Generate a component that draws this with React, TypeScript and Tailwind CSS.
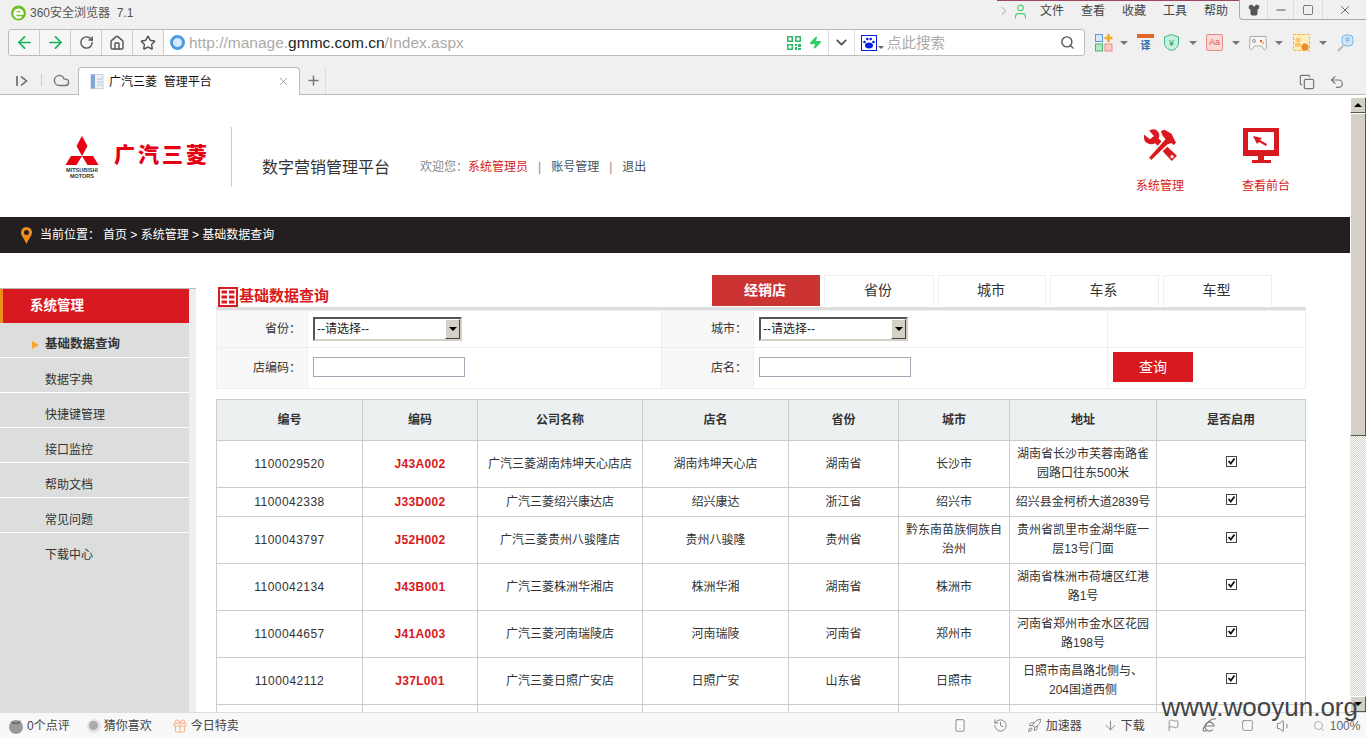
import {
  ArrowDown,
  ArrowLeft,
  ArrowRight,
  ChevronDown,
  ChevronRight,
  Cloud,
  Flag,
  Gift,
  Home,
  Minus,
  Plus,
  RotateCw,
  Rocket,
  Search,
  Shirt,
  Smartphone,
  Square,
  Star,
  Undo2,
  User,
  Volume1,
  X,
  Zap,
  Copy,
  History,
} from "lucide-react";

const menus = ["文件", "查看", "收藏", "工具", "帮助"];
const sideItems = ["数据字典", "快捷键管理", "接口监控", "帮助文档", "常见问题", "下载中心"];
const tabs = [
  { label: "省份", cls: "w-[110px]" },
  { label: "城市", cls: "w-[108px]" },
  { label: "车系", cls: "w-[109px]" },
  { label: "车型", cls: "w-[109px]" },
];
const heads = ["编号", "编码", "公司名称", "店名", "省份", "城市", "地址", "是否启用"];
const rows = [
  { h: "h-[47px]", id: "1100029520", code: "J43A002", company: "广汽三菱湖南炜坤天心店店", shop: "湖南炜坤天心店", prov: "湖南省", city: "长沙市", addr: "湖南省长沙市芙蓉南路雀园路口往东500米" },
  { h: "h-[29px]", id: "1100042338", code: "J33D002", company: "广汽三菱绍兴康达店", shop: "绍兴康达", prov: "浙江省", city: "绍兴市", addr: "绍兴县金柯桥大道2839号" },
  { h: "h-[47px]", id: "1100043797", code: "J52H002", company: "广汽三菱贵州八骏隆店", shop: "贵州八骏隆", prov: "贵州省", city: "黔东南苗族侗族自治州", addr: "贵州省凯里市金湖华庭一层13号门面" },
  { h: "h-[47px]", id: "1100042134", code: "J43B001", company: "广汽三菱株洲华湘店", shop: "株洲华湘", prov: "湖南省", city: "株洲市", addr: "湖南省株洲市荷塘区红港路1号" },
  { h: "h-[47px]", id: "1100044657", code: "J41A003", company: "广汽三菱河南瑞陵店", shop: "河南瑞陵", prov: "河南省", city: "郑州市", addr: "河南省郑州市金水区花园路198号" },
  { h: "h-[47px]", id: "1100042112", code: "J37L001", company: "广汽三菱日照广安店", shop: "日照广安", prov: "山东省", city: "日照市", addr: "日照市南昌路北侧与、204国道西侧" },
  { h: "h-[47px]", id: "", code: "", company: "", shop: "", prov: "", city: "", addr: "" },
];

function Caret() {
  return <span className="h-0 w-0 border-x-[4px] border-t-[4px] border-x-transparent border-t-[#777]" />;
}

function TitleBar() {
  return (
    <div className="flex h-[29px]">
      <svg className="ml-[11px] mt-[5px] h-[16px] w-[15px]" viewBox="0 0 15 16">
        <circle cx="7.5" cy="8" r="7.5" fill="#6cc024" />
        <path d="M3.500 8.500h8a4 4 0 1 0-1.200 3" fill="none" stroke="#fff" strokeWidth="2.400" />
      </svg>
      <span className="ml-[4px] mt-[5px] text-[12px] leading-[17px] text-[#555]">360安全浏览器&nbsp;&nbsp;7.1</span>
      <div className="ml-auto flex h-[21px] items-start">
        <div className="flex h-[21px] items-center border-t border-[#a0455f]">
          <ChevronRight className="h-[14px] w-[14px] text-[#999]" strokeWidth={1.5} />
          <User className="ml-[1px] h-[17px] w-[17px] text-[#4fcf75]" strokeWidth={1.6} />
          <div className="ml-[11px] flex gap-[17px] pr-[11px]">
            {menus.map((m) => (
              <span key={m} className="text-[12px] leading-[16px] text-[#444]">
                {m}
              </span>
            ))}
          </div>
        </div>
        <div className="flex h-[20px] w-[127px] items-center rounded-bl-[4px] border-b border-l border-[#aaa] text-[#555]">
          <div className="flex h-full w-[28px] items-center justify-center border-r border-[#ddd]">
            <Shirt className="h-[12px] w-[12px] fill-[#555]" />
          </div>
          <div className="flex h-full w-[26px] items-center justify-center border-r border-[#ddd]">
            <Minus className="h-[14px] w-[14px]" />
          </div>
          <div className="flex h-full w-[29px] items-center justify-center border-r border-[#ddd]">
            <Square className="h-[12px] w-[12px]" strokeWidth={1.5} />
          </div>
          <div className="flex h-full flex-1 items-center justify-center">
            <X className="h-[14px] w-[14px]" strokeWidth={1.5} />
          </div>
        </div>
      </div>
    </div>
  );
}

function NavButton({ children }: { children: React.ReactNode }) {
  return <div className="flex h-full w-[31px] items-center justify-center border-r border-[#ccc]">{children}</div>;
}

function AddressBar() {
  return (
    <div className="flex h-[27px]">
      <div className="ml-[8px] flex h-[27px] w-[1077px] items-center overflow-hidden rounded-[3px] border border-[#bbb] bg-white">
        <div className="flex h-full bg-[#f6f6f6]">
          <NavButton><ArrowLeft className="h-[19px] w-[19px] text-[#16b35a]" strokeWidth={2.2} /></NavButton>
          <NavButton><ArrowRight className="h-[19px] w-[19px] text-[#16b35a]" strokeWidth={2.2} /></NavButton>
          <NavButton><RotateCw className="h-[15px] w-[15px] text-[#555]" strokeWidth={2.2} /></NavButton>
          <NavButton><Home className="h-[16px] w-[16px] text-[#555]" strokeWidth={2.2} /></NavButton>
          <NavButton><Star className="h-[16px] w-[16px] text-[#555]" strokeWidth={2.2} /></NavButton>
        </div>
        <span className="ml-[6px] h-[15px] w-[15px] rounded-full border-[3px] border-[#4a9be0] bg-[#d5e9fa]" />
        <span className="ml-[4px] text-[15.500px] text-[#aaa]">
          http://manage.<span className="text-[#222]">gmmc.com.cn</span>/Index.aspx
        </span>
        <svg className="ml-auto h-[14px] w-[14px]" viewBox="0 0 14 14" fill="#2fb866">
          <path d="M0 0h6v6H0zM1.500 1.500v3h3v-3zM8 0h6v6H8zM9.500 1.500v3h3v-3zM0 8h6v6H0zM1.500 9.500v3h3v-3zM8 8h2v2H8zM11 8h3v3h-3zM8 11h2v3H8zM11 12h3v2h-3z" fillRule="evenodd" />
        </svg>
        <Zap className="ml-[8px] h-[15px] w-[13px] fill-[#2fd06a] text-[#2fd06a]" />
        <div className="ml-[6px] h-full w-px bg-[#ddd]" />
        <ChevronDown className="ml-[4px] h-[17px] w-[17px] text-[#555]" strokeWidth={2.6} />
        <div className="ml-[4px] h-full w-px bg-[#ddd]" />
        <svg className="ml-[6px] h-[16px] w-[16px]" viewBox="0 0 16 16">
          <rect x="0.500" y="0.500" width="15" height="15" fill="#fff" stroke="#0a1ee0" />
          <ellipse cx="8" cy="10.500" rx="4" ry="3" fill="#0a1ee0" />
          <circle cx="3.500" cy="7" r="1.300" fill="#0a1ee0" />
          <circle cx="6.300" cy="4" r="1.300" fill="#0a1ee0" />
          <circle cx="9.700" cy="4" r="1.300" fill="#0a1ee0" />
          <circle cx="12.500" cy="7" r="1.300" fill="#0a1ee0" />
        </svg>
        <span className="ml-[1px] mt-[10px] h-0 w-0 border-x-[3px] border-t-[3px] border-x-transparent border-t-[#666]" />
        <span className="ml-[3px] text-[14.500px] leading-[20px] text-[#aaa]">点此搜索</span>
        <Search className="ml-[115px] mr-[9px] h-[15px] w-[15px] text-[#555]" strokeWidth={2.2} />
      </div>
      <div className="ml-[10px] flex items-center">
        <svg className="h-[18px] w-[18px]" viewBox="0 0 18 18" strokeWidth="1">
          <rect x="0.500" y="0.500" width="7" height="7" fill="#d5e9fa" stroke="#5a9bd8" />
          <rect x="0.500" y="10" width="7" height="7" fill="#b4e8c4" stroke="#46b46e" />
          <rect x="10" y="10" width="7" height="7" fill="#fcc" stroke="#e88" />
          <path d="M13.500 0v8M9.500 4h8" stroke="#f6a821" strokeWidth="2.500" />
        </svg>
        <span className="ml-[7px] flex"><Caret /></span>
        <svg className="ml-[9px] h-[17px] w-[17px]" viewBox="0 0 17 17">
          <rect width="17" height="17" fill="#eee" />
          <rect width="17" height="4" fill="#e0662a" />
          <text x="8.500" y="14.500" fontSize="10" textAnchor="middle" fill="#2a6fb0" fontWeight="700">译</text>
        </svg>
        <svg className="ml-[10px] h-[17px] w-[15px]" viewBox="0 0 15 17">
          <path d="M7.500 0.500 14.500 3v6c0 4-3.500 6.500-7 7.500C4 15.500.500 13 .500 9V3z" fill="#c8f0dc" stroke="#35b880" />
          <text x="7.500" y="12" fontSize="9" textAnchor="middle" fill="#1d9a62">¥</text>
        </svg>
        <span className="ml-[10px] flex"><Caret /></span>
        <span className="ml-[9px] flex h-[17px] w-[17px] items-center justify-center rounded-[2px] border border-[#e58a8a] bg-[#fdd9d5] text-[9px] text-[#d85a5a]">Aa</span>
        <span className="ml-[9px] flex"><Caret /></span>
        <svg className="ml-[9px] h-[16px] w-[18px]" viewBox="0 0 18 16" fill="none" stroke="#aaa">
          <path d="M1 1.500h16l.500 12-2 1.500-3-4H5.500l-3 4-2-1.500z" fill="#f7f7f7" />
          <circle cx="5" cy="6" r="1.500" stroke="#999" />
          <rect x="11" y="5" width="2" height="2" fill="#e8583a" stroke="none" />
          <rect x="13" y="7" width="2" height="2" fill="#f2b632" stroke="none" />
        </svg>
        <span className="ml-[8px] flex"><Caret /></span>
        <svg className="ml-[10px] h-[17px] w-[17px]" viewBox="0 0 17 17">
          <rect x="0.500" y="0.500" width="16" height="16" fill="#fdeec2" stroke="#f2b632" strokeDasharray="3 1.500" />
          <circle cx="5" cy="6" r="2.500" fill="#f5c86a" />
          <rect x="2" y="9" width="6" height="4" fill="#f5c86a" />
          <circle cx="12" cy="13" r="3.500" fill="#ea8a2c" />
        </svg>
        <span className="ml-[9px] flex"><Caret /></span>
        <svg className="ml-[10px] h-[18px] w-[17px]" viewBox="0 0 17 18" fill="none">
          <path d="M6 12 1 17" stroke="#bbb" strokeWidth="2" />
          <rect x="5" y="1" width="11" height="11" rx="4" fill="#cfe6f8" stroke="#7db4e0" />
          <circle cx="10.500" cy="5.500" r="1.500" stroke="#5a9bd8" />
        </svg>
      </div>
    </div>
  );
}

function TabStrip() {
  return (
    <div className="mt-[11px] flex h-[28px] border-b border-[#bbb]">
      <svg className="ml-[16px] mt-[8px] h-[12px] w-[12px]" viewBox="0 0 12 12" fill="none" stroke="#666" strokeWidth="1.600">
        <path d="M1 1v10M5 1.500 10.500 6 5 10.500" />
      </svg>
      <span className="ml-[13px] mt-[7px] h-[12px] w-px bg-[#ccc]" />
      <Cloud className="ml-[11px] mt-[5px] h-[17px] w-[17px] text-[#777]" strokeWidth={2} />
      <div className="ml-[8px] flex h-[28px] w-[222px] items-center rounded-t-[4px] border-x border-t border-[#bbb] bg-white">
        <svg className="ml-[11px] h-[15px] w-[15px]" viewBox="0 0 15 15">
          <rect x="1" y="0.500" width="12" height="14" fill="#eef2f7" stroke="#c5d2e0" />
          <rect x="1" y="0.500" width="4" height="14" fill="#7fa8d8" />
          <path d="M7 5h5M7 8h5M7 11h5" stroke="#b8c4d2" />
        </svg>
        <span className="ml-[4px] text-[12px] leading-[16px] text-[#111]">广汽三菱&nbsp;&nbsp;管理平台</span>
        <X className="ml-auto mr-[9px] h-[13px] w-[13px] text-[#999]" strokeWidth={1.6} />
      </div>
      <Plus className="ml-[6px] mt-[6px] h-[15px] w-[15px] text-[#777]" strokeWidth={2.4} />
      <span className="ml-[4px] h-[27px] w-px bg-[#ddd]" />
      <Copy className="ml-auto mt-[7px] h-[16px] w-[16px] text-[#777]" strokeWidth={1.8} />
      <Undo2 className="ml-[14px] mr-[21px] mt-[7px] h-[16px] w-[16px] text-[#777]" strokeWidth={1.8} />
    </div>
  );
}

function PageHeader() {
  return (
    <header className="flex h-[122px] bg-white">
      <div className="ml-[65px] mt-[41px] flex w-[34px] flex-col items-center">
        <svg className="h-[29px] w-[34px]" viewBox="0 0 34 29" fill="#e60012">
          <path d="M17 0 22.500 10 17 20 11.500 10zM17 20H28L33.500 29H22.500zM17 20H6L.5 29H11.500z" />
        </svg>
        <span className="mt-[2px] text-[5.500px] font-bold leading-[6px] text-[#333]">MITSUBISHI</span>
        <span className="text-[5.500px] font-bold leading-[6px] text-[#333]">MOTORS</span>
      </div>
      <span className="ml-[15px] mt-[48px] text-[21px] font-black leading-[23px] tracking-[3px] text-[#e60012]">广汽三菱</span>
      <div className="ml-[21px] mt-[32px] h-[60px] w-px bg-[#ccc]" />
      <span className="ml-[30px] mt-[62px] text-[16px] leading-[22px] text-[#333]">数字营销管理平台</span>
      <div className="ml-[30px] mt-[63px] flex text-[12px] leading-[18px] text-[#46525c]">
        <span className="text-[#888]">欢迎您：</span>
        <span className="text-[#d91920]">系统管理员</span>
        <span className="mx-[10px] text-[#888]">|</span>
        <span>账号管理</span>
        <span className="mx-[10px] text-[#888]">|</span>
        <span>退出</span>
      </div>
      <div className="ml-auto mr-[44px] mt-[33px] flex gap-[26px]">
        <div className="flex w-[80px] flex-col items-center">
          <svg className="h-[33px] w-[33px]" viewBox="0 0 100 100" fill="#d91920">
            <path d="M0 20 18 34 30 24 16 8C28 0 42 4 46 18 47 24 46 28 44 32L100 84 84 100 34 46C24 52 12 50 4 42 0 36-1 28 0 20z" />
            <path d="M12 90 62 34 54 24 48 8 62 2 85 15 100 45 90 55 82 48 72 52 22 100z" stroke="#fff" strokeWidth="5" />
            <circle cx="85" cy="87" r="5" fill="#fff" />
          </svg>
          <span className="mt-[17px] text-[12px] leading-[16px] text-[#d91920]">系统管理</span>
        </div>
        <div className="flex w-[80px] flex-col items-center">
          <svg className="-ml-[11px] h-[36px] w-[36px]" viewBox="0 0 36 36" fill="#d91920">
            <path fillRule="evenodd" d="M0 0h36v28H0zM5 4v18h26V4z" />
            <path d="M15 28h6v4h-6zM9 32h19v3H9z" />
            <path d="M10 8l9 2-2 2 7 4-1 2-7-4-2 2z" />
          </svg>
          <span className="mt-[14px] text-[12px] leading-[16px] text-[#d91920]">查看前台</span>
        </div>
      </div>
    </header>
  );
}

function Breadcrumb() {
  return (
    <div className="flex h-[36px] items-center bg-[#231f20] text-[12px] text-white">
      <svg className="ml-[20px] h-[19px] w-[13px]" viewBox="0 0 13 19" fill="none">
        <path d="M6.500 1A5.500 5.500 0 0 0 1 6.500c0 3.500 3 5.500 5.500 11.500C9 12 12 10 12 6.500A5.500 5.500 0 0 0 6.500 1z" fill="#ee8c1c" />
        <circle cx="6.500" cy="6.500" r="2.500" fill="#231f20" />
      </svg>
      <span className="ml-[7px]">当前位置：</span>
      <span className="ml-[3px]">首页 &gt; 系统管理 &gt; 基础数据查询</span>
    </div>
  );
}

function Sidebar() {
  return (
    <aside className="mt-[35px] flex w-[196px] flex-col border-t border-[#bbb] bg-[#eeeeee] pr-[7px]">
      <div className="flex-1 bg-[#dcdedd]">
        <div className="flex h-[34px] items-center border-l-[3px] border-[#f08c1c] bg-[#d91920] pl-[27px] pt-[1px] text-[13.500px] font-bold text-white">
          系统管理
        </div>
        <div className="flex h-[35px] items-center border-b border-white pl-[32px] pt-[9px] text-[12.500px] font-bold text-[#333]">
          <span className="h-0 w-0 border-y-[4px] border-l-[7px] border-y-transparent border-l-[#f9a52a]" />
          <span className="ml-[6px]">基础数据查询</span>
        </div>
        {sideItems.map((s, i) => (
          <div key={s} className={`flex h-[35px] items-center border-b pl-[45px] pt-[9px] text-[12px] text-[#333] ${i < 5 ? "border-white" : "border-transparent"}`}>
            {s}
          </div>
        ))}
      </div>
    </aside>
  );
}

function FakeSelect() {
  return (
    <div className="mb-[1px] flex h-[24px] w-[149px] border-2 border-b-[#d4d0c8] border-l-[#555] border-r-[#d4d0c8] border-t-[#555] bg-white">
      <span className="flex-1 pl-[2px] text-[12px] leading-[20px] text-[#222]">--请选择--</span>
      <span className="flex w-[15px] items-center justify-center border border-b-[#444] border-l-white border-r-[#444] border-t-white bg-[#d4d0c8]">
        <span className="h-0 w-0 border-x-[4px] border-t-[4px] border-x-transparent border-t-black" />
      </span>
    </div>
  );
}

function Checkbox() {
  return (
    <span className="mb-[5px] inline-flex h-[11px] w-[11px] items-center justify-center border border-[#444] bg-white align-middle">
      <svg className="h-[9px] w-[9px]" viewBox="0 0 9 9" fill="none" stroke="#111" strokeWidth="1.800">
        <path d="M1.500 4 3.800 6.500 7.500 1.500" />
      </svg>
    </span>
  );
}

function FilterTable() {
  const label = "border border-[#eeeeee] bg-[#f8f8f8] pr-[6px] text-right text-[12px] text-[#333]";
  const cell = "border border-[#eeeeee] pl-[5px]";
  return (
    <table className="w-[1089px] table-fixed border-collapse">
      <colgroup>
        <col className="w-[91px]" />
        <col className="w-[354px]" />
        <col className="w-[92px]" />
        <col className="w-[354px]" />
        <col className="w-[198px]" />
      </colgroup>
      <tbody>
        <tr className="h-[37px]">
          <td className={label}>省份：</td>
          <td className={cell}><FakeSelect /></td>
          <td className={label}>城市：</td>
          <td className={cell}><FakeSelect /></td>
          <td className={cell} />
        </tr>
        <tr className="h-[41px]">
          <td className={label}>店编码：</td>
          <td className={cell}><div className="mb-[2px] h-[20px] w-[152px] border border-[#a0aab5] bg-white" /></td>
          <td className={label}>店名：</td>
          <td className={cell}><div className="mb-[2px] h-[20px] w-[152px] border border-[#a0aab5] bg-white" /></td>
          <td className={cell}>
            <div className="mb-[2px] flex h-[30px] w-[80px] items-center justify-center bg-[#d91920] text-[14px] text-white">查询</div>
          </td>
        </tr>
      </tbody>
    </table>
  );
}

function DataTable() {
  const td = "border border-[#cccccc] px-[4px] text-center text-[12px] leading-[19px] text-[#333]";
  const th = "border border-[#cccccc] text-center text-[12px] font-bold text-[#333]";
  return (
    <table className="mt-[10px] w-[1089px] table-fixed border-collapse">
      <colgroup>
        <col className="w-[146px]" />
        <col className="w-[115px]" />
        <col className="w-[165px]" />
        <col className="w-[146px]" />
        <col className="w-[110px]" />
        <col className="w-[111px]" />
        <col className="w-[147px]" />
        <col className="w-[149px]" />
      </colgroup>
      <thead>
        <tr className="h-[41px] bg-[#edf0f1]">
          {heads.map((h) => (
            <th key={h} className={th}>{h}</th>
          ))}
        </tr>
      </thead>
      <tbody>
        {rows.map((r, i) => (
          <tr key={i} className={r.h}>
            <td className={`${td} tracking-[0.45px]`}>{r.id}</td>
            <td className={`${td} font-bold tracking-[0.3px] text-[#d91920]`}>{r.code}</td>
            <td className={td}>{r.company}</td>
            <td className={td}>{r.shop}</td>
            <td className={td}>{r.prov}</td>
            <td className={td}>{r.city}</td>
            <td className={td}>{r.addr}</td>
            <td className={td}>{r.id ? <Checkbox /> : null}</td>
          </tr>
        ))}
      </tbody>
    </table>
  );
}

function MainPanel() {
  return (
    <main className="ml-[20px] w-[1090px] pt-[21px]">
      <div className="flex h-[36px] border-b-[3px] border-[#dddddd]">
        <div className="ml-[2px] mt-[13px] flex h-[20px] items-center">
          <svg className="h-[20px] w-[20px]" viewBox="0 0 20 20">
            <rect width="20" height="20" fill="#d91920" />
            <rect x="2" y="2" width="16" height="16" fill="#fff" />
            <path d="M3.500 3.500h5.500v3H3.500zM11 3.500h5.500v3H11zM3.500 8.500h5.500v3H3.500zM11 8.500h5.500v3H11zM3.500 13.500h5.500v3H3.500zM11 13.500h5.500v3H11z" fill="#d91920" />
          </svg>
          <span className="-mt-[2px] ml-px text-[15px] font-bold leading-[20px] text-[#d91920]">基础数据查询</span>
        </div>
        <div className="ml-auto mr-[34px] mt-[1px] flex gap-[4px]">
          <div className="flex h-[31px] w-[108px] items-center justify-center bg-[#cc3333] pr-[2px] text-[14px] font-bold text-white">经销店</div>
          {tabs.map((t) => (
            <div key={t.label} className={`flex h-[31px] items-center justify-center border-x border-t border-[#eeeeee] pb-[1px] pr-[2px] text-[14px] text-[#333] ${t.cls}`}>
              {t.label}
            </div>
          ))}
        </div>
      </div>
      <FilterTable />
      <DataTable />
    </main>
  );
}

function Scrollbar() {
  const raised = "border border-b-[#555] border-l-white border-r-[#555] border-t-white bg-[#d4d0c8]";
  return (
    <div className="flex w-[16px] flex-col bg-white pt-[2px]">
      <div className={`flex h-[16px] items-center justify-center ${raised}`}>
        <span className="h-0 w-0 border-x-[4px] border-b-[4px] border-x-transparent border-b-black" />
      </div>
      <div className={`h-[323px] ${raised}`} />
      <div className="flex-1 bg-[repeating-conic-gradient(#d4d0c8_0_25%,#ffffff_0_50%)] bg-[length:2px_2px]" />
      <div className={`flex h-[16px] items-center justify-center ${raised}`}>
        <span className="h-0 w-0 border-x-[4px] border-t-[4px] border-x-transparent border-t-black" />
      </div>
    </div>
  );
}

function StatusBar() {
  const icon = "text-[#777]";
  return (
    <footer className="flex h-[26px] items-center border-t border-[#dddddd] bg-[#f8f8f8] text-[12px] text-[#444]">
      <svg className="ml-[8px] h-[16px] w-[16px]" viewBox="0 0 16 16">
        <circle cx="8" cy="9" r="7" fill="#999" />
        <path d="M3 3l5 2 5-3-2 4H5z" fill="#666" />
      </svg>
      <span className="ml-[3px]">0个点评</span>
      <span className="ml-[17px] flex h-[14px] w-[14px] items-center justify-center rounded-full bg-[#e4e4e4]">
        <span className="h-[9px] w-[9px] rounded-full bg-[#aaa]" />
      </span>
      <span className="ml-[3px]">猜你喜欢</span>
      <Gift className="ml-[20px] h-[16px] w-[16px] text-[#f7b592]" strokeWidth={1.6} />
      <span className="ml-[3px]">今日特卖</span>
      <Smartphone className={`ml-[714px] h-[17px] w-[14px] ${icon}`} strokeWidth={1.4} />
      <History className={`ml-[26px] h-[15px] w-[15px] ${icon}`} strokeWidth={1.4} />
      <Rocket className={`ml-[19px] h-[15px] w-[15px] ${icon}`} strokeWidth={1.4} />
      <span className="ml-[4px]">加速器</span>
      <ArrowDown className={`ml-[21px] h-[15px] w-[15px] ${icon}`} strokeWidth={1.4} />
      <span className="ml-[3px]">下载</span>
      <Flag className={`ml-[22px] h-[13px] w-[13px] ${icon}`} strokeWidth={1.4} />
      <svg className="ml-[22px] h-[15px] w-[15px]" viewBox="0 0 15 15" fill="none" stroke="#777" strokeWidth="1.100">
        <path d="M3 8h9a4.500 4.500 0 1 0-1 3.500" />
        <path d="M14 1C11 0 5 3 1.500 10c-1 2.500 0 4 3.500 2.500" />
      </svg>
      <Square className={`ml-[24px] h-[13px] w-[13px] ${icon}`} strokeWidth={1.4} />
      <Volume1 className={`ml-[22px] h-[16px] w-[16px] ${icon}`} strokeWidth={1.4} />
      <Search className={`ml-[21px] h-[12px] w-[12px] text-[#999]`} strokeWidth={1.6} />
      <span className="ml-[5px] text-[#666]">100%</span>
    </footer>
  );
}

export default function App() {
  return (
    <div className="relative flex h-[738px] w-[1366px] flex-col overflow-hidden bg-[#f0f0f0] [font-family:'Liberation_Sans','Noto_Sans_CJK_SC',sans-serif]">
      <div className="h-[95px] shrink-0">
        <TitleBar />
        <AddressBar />
        <TabStrip />
      </div>
      <div className="flex min-h-0 flex-1 bg-white">
        <div className="w-[1350px] overflow-hidden">
          <PageHeader />
          <Breadcrumb />
          <div className="flex h-[459px]">
            <Sidebar />
            <MainPanel />
          </div>
        </div>
        <Scrollbar />
      </div>
      <StatusBar />
      <span className="absolute bottom-[22px] right-[8px] text-[26px] leading-[18px] text-[#444]">www.wooyun.org</span>
    </div>
  );
}
